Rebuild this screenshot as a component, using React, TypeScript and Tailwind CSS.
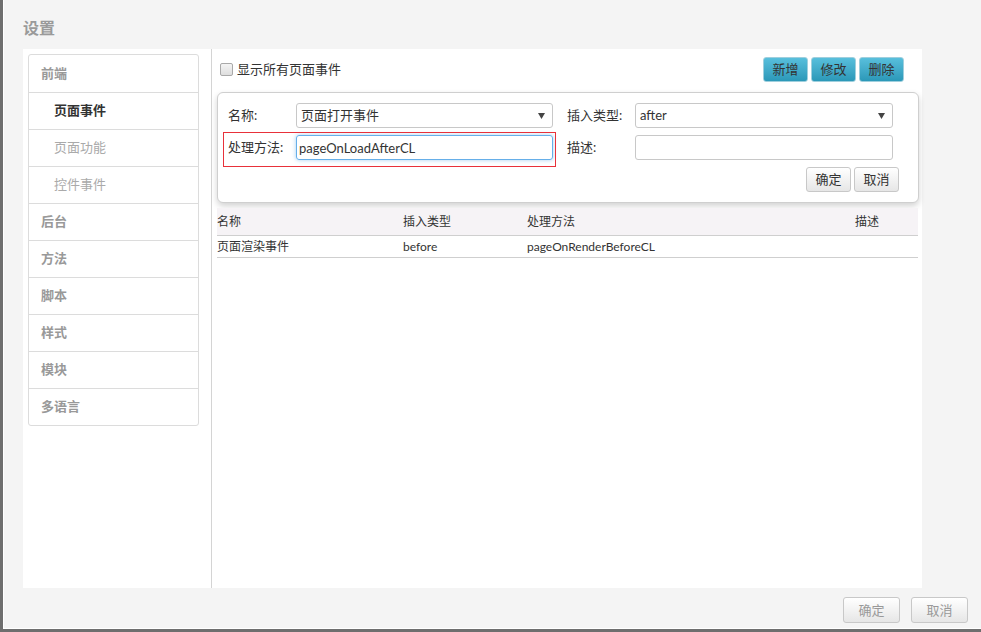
import { useState } from 'react';

const font = { fontFamily: 'Lato, "Noto Sans CJK SC", sans-serif' };

const menu = [
    { label: '前端', level: 0 },
    { label: '页面事件', level: 1, active: true },
    { label: '页面功能', level: 1 },
    { label: '控件事件', level: 1 },
    { label: '后台', level: 0 },
    { label: '方法', level: 0 },
    { label: '脚本', level: 0 },
    { label: '样式', level: 0 },
    { label: '模块', level: 0 },
    { label: '多语言', level: 0 },
];

const rows = [
    { name: '页面渲染事件', type: 'before', handler: 'pageOnRenderBeforeCL', desc: '' },
];

function TealButton({ children }: { children: React.ReactNode }) {
    return (
        <button className="h-[25px] w-[45px] rounded-[3px] border border-[#9fcfdd] bg-gradient-to-b from-[#58bfdc] to-[#2b98b8] text-[13px] text-[#333] leading-none">
            {children}
        </button>
    );
}

function GrayButton({ children, className = '' }: { children: React.ReactNode; className?: string }) {
    return (
        <button className={`rounded-[3px] border border-[#c8c8c8] bg-gradient-to-b from-[#ffffff] to-[#e6e6e6] text-[13px] leading-none ${className}`}>
            {children}
        </button>
    );
}

function Select({ value }: { value: string }) {
    return (
        <div className="flex h-[25px] items-center justify-between rounded-[3px] border border-[#c8c8c8] bg-white pl-[4px] pr-[7px] text-[13px] text-[#333]">
            <span>{value}</span>
            <svg width="7" height="6" viewBox="0 0 7 6">
                <path d="M0 0 L7 0 L3.5 6 Z" fill="#444" />
            </svg>
        </div>
    );
}

export default function App() {
    const [showAll, setShowAll] = useState(false);
    const [handler, setHandler] = useState('pageOnLoadAfterCL');
    const [desc, setDesc] = useState('');

    return (
        <div className="h-[632px] w-[981px] overflow-hidden bg-[#6e6e6e]" style={font}>
            <div className="ml-[3px] flex h-[629px] flex-col border-b border-l border-white bg-[#f4f4f4]">
                <div className="flex h-[49px] items-end pb-[9px] pl-[19px] text-[16px] font-bold text-[#9a9a9a]">设置</div>

                <div className="ml-[19px] flex h-[539px] w-[899px] bg-white">
                    {/* sidebar */}
                    <div className="w-[189px] border-r border-[#d4d4d4] p-[5px]">
                        <div className="w-[171px] rounded-[3px] border border-[#dcdcdc]">
                            {menu.map((m, i) => (
                                <div
                                    key={m.label}
                                    className={`flex h-[37px] items-center text-[13px] ${i > 0 ? 'border-t border-[#dcdcdc]' : ''} ${m.level === 1 ? 'pl-[25px]' : 'pl-[12px]'} ${m.active ? 'font-bold text-[#333]' : m.level === 1 ? 'text-[#aaa]' : 'font-bold text-[#999]'}`}
                                >
                                    {m.label}
                                </div>
                            ))}
                        </div>
                    </div>

                    {/* main */}
                    <div className="flex-1 pl-[5px] pr-[3px] pt-[8px]">
                        <div className="flex h-[25px] items-center justify-between pr-[15px]">
                            <label className="flex items-center gap-[4px] pl-[3px] text-[13px] text-[#333]">
                                <input
                                    type="checkbox"
                                    checked={showAll}
                                    onChange={(e) => setShowAll(e.target.checked)}
                                    className="h-[13px] w-[13px] appearance-none rounded-[2px] border border-[#a9a9a9] bg-gradient-to-b from-[#f4f4f4] to-[#dedede]"
                                />
                                显示所有页面事件
                            </label>
                            <div className="flex gap-[3px]">
                                <TealButton>新增</TealButton>
                                <TealButton>修改</TealButton>
                                <TealButton>删除</TealButton>
                            </div>
                        </div>

                        <div className="mt-[10px] w-[702px] rounded-[6px] border border-[#cfcfcf] bg-white px-[10px] pb-[10px] pt-[10px] shadow-[0_3px_6px_rgba(0,0,0,0.18)]">
                            <div className="flex items-center">
                                <div className="w-[68px] text-[13px] text-[#333]">名称:</div>
                                <div className="w-[257px]"><Select value="页面打开事件" /></div>
                                <div className="ml-[14px] w-[68px] text-[13px] text-[#333]">插入类型:</div>
                                <div className="w-[258px]"><Select value="after" /></div>
                            </div>
                            <div className="relative mt-[7px] flex items-center">
                                <div className="pointer-events-none absolute left-[-5px] top-[-3px] h-[35px] w-[333px] border border-[#e8313a]" />
                                <div className="w-[68px] text-[13px] text-[#333]">处理方法:</div>
                                <input
                                    value={handler}
                                    onChange={(e) => setHandler(e.target.value)}
                                    className="h-[25px] w-[257px] rounded-[3px] border border-[#66afe9] px-[2px] text-[13px] text-[#333] shadow-[0_0_4px_rgba(102,175,233,0.6)] outline-none"
                                />
                                <div className="ml-[14px] w-[68px] text-[13px] text-[#333]">描述:</div>
                                <input
                                    value={desc}
                                    onChange={(e) => setDesc(e.target.value)}
                                    className="h-[25px] w-[258px] rounded-[3px] border border-[#c8c8c8] px-[4px] text-[13px] outline-none"
                                />
                            </div>
                            <div className="mt-[7px] flex justify-end gap-[3px] pr-[9px]">
                                <GrayButton className="h-[25px] w-[45px] text-[#333]">确定</GrayButton>
                                <GrayButton className="h-[25px] w-[45px] text-[#333]">取消</GrayButton>
                            </div>
                        </div>

                        <div className="mt-[5px] w-[701px] text-[12px] text-[#333]">
                            <div className="flex h-[28px] items-center border-b border-[#cfcfcf] bg-[#f6f3f6]">
                                <div className="w-[186px]">名称</div>
                                <div className="w-[124px]">插入类型</div>
                                <div className="w-[328px]">处理方法</div>
                                <div className="flex-1">描述</div>
                            </div>
                            {rows.map((r) => (
                                <div key={r.name} className="flex h-[22px] items-center border-b border-[#cfcfcf]">
                                    <div className="w-[186px]">{r.name}</div>
                                    <div className="w-[124px]">{r.type}</div>
                                    <div className="w-[328px]">{r.handler}</div>
                                    <div className="flex-1">{r.desc}</div>
                                </div>
                            ))}
                        </div>
                    </div>
                </div>

                <div className="mt-[9px] flex justify-end gap-[11px] pr-[13px]">
                    <GrayButton className="h-[26px] w-[57px] text-[#999]">确定</GrayButton>
                    <GrayButton className="h-[26px] w-[57px] text-[#999]">取消</GrayButton>
                </div>
            </div>
        </div>
    );
}
